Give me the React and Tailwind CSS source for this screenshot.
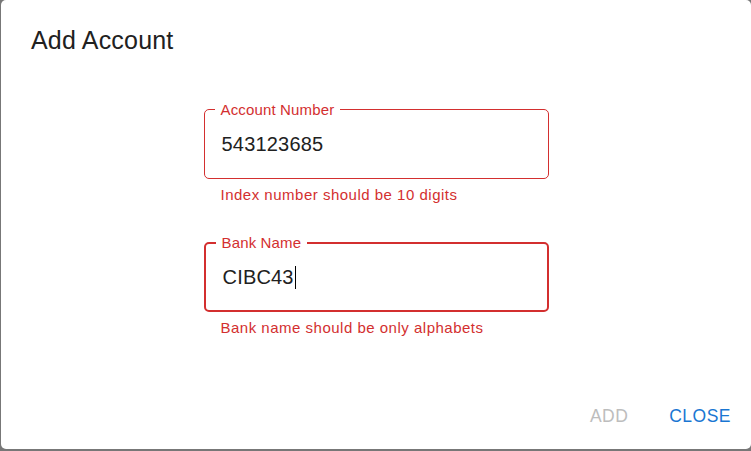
const font = { fontFamily: '"Liberation Sans", Arial, sans-serif' };

function OutlinedField({ label, value, helper, focused, caret }) {
  return (
    <div className="w-[345px]">
      <div
        className={`relative h-[70px] rounded-[5px] border-[#d32f2f] flex items-center pl-[17px] ${
          focused ? "border-2 pl-[16px]" : "border"
        }`}
      >
        <span
          className={`absolute left-[10px] px-[6px] bg-white text-[15px] leading-[17px] text-[#d32f2f] tracking-[0.15px] ${
            focused ? "top-[-10px]" : "top-[-9px]"
          }`}
        >
          {label}
        </span>
        <span className="text-[20px] text-[#212121] tracking-[0.19px] flex items-center">
          {value}
          {caret && <span className="inline-block w-px h-[23px] bg-black ml-px" />}
        </span>
      </div>
      <p className="mt-[3px] pl-[17px] text-[15px] leading-[25px] text-[#d32f2f] tracking-[0.5px]">
        {helper}
      </p>
    </div>
  );
}

export default function App() {
  return (
    <div className="w-[751px] h-[451px] bg-[#777777] overflow-hidden" style={font}>
      <div className="ml-[1px] w-[750px] h-[449px] bg-white rounded-[5px] flex flex-col">
        <h2 className="px-[30px] py-[20px] text-[25px] leading-[40px] text-[#212121] tracking-[0.19px]">
          Add Account
        </h2>
        <div className="flex flex-col items-center pt-[29px]">
          <OutlinedField
            label="Account Number"
            value="543123685"
            helper="Index number should be 10 digits"
          />
          <div className="mt-[35px]">
            <OutlinedField
              label="Bank Name"
              value="CIBC43"
              helper="Bank name should be only alphabets"
              focused
              caret
            />
          </div>
        </div>
        <div className="mt-auto p-[10px] flex justify-end gap-[10px]">
          <button className="min-w-[80px] px-[10px] py-[7.5px] text-[17.5px] leading-[30.5px] uppercase tracking-[0.5px] text-[#bdbdbd] rounded-[5px]">
            Add
          </button>
          <button className="min-w-[80px] px-[10px] py-[7.5px] text-[17.5px] leading-[30.5px] uppercase tracking-[0.5px] text-[#1976d2] rounded-[5px]">
            Close
          </button>
        </div>
      </div>
    </div>
  );
}
